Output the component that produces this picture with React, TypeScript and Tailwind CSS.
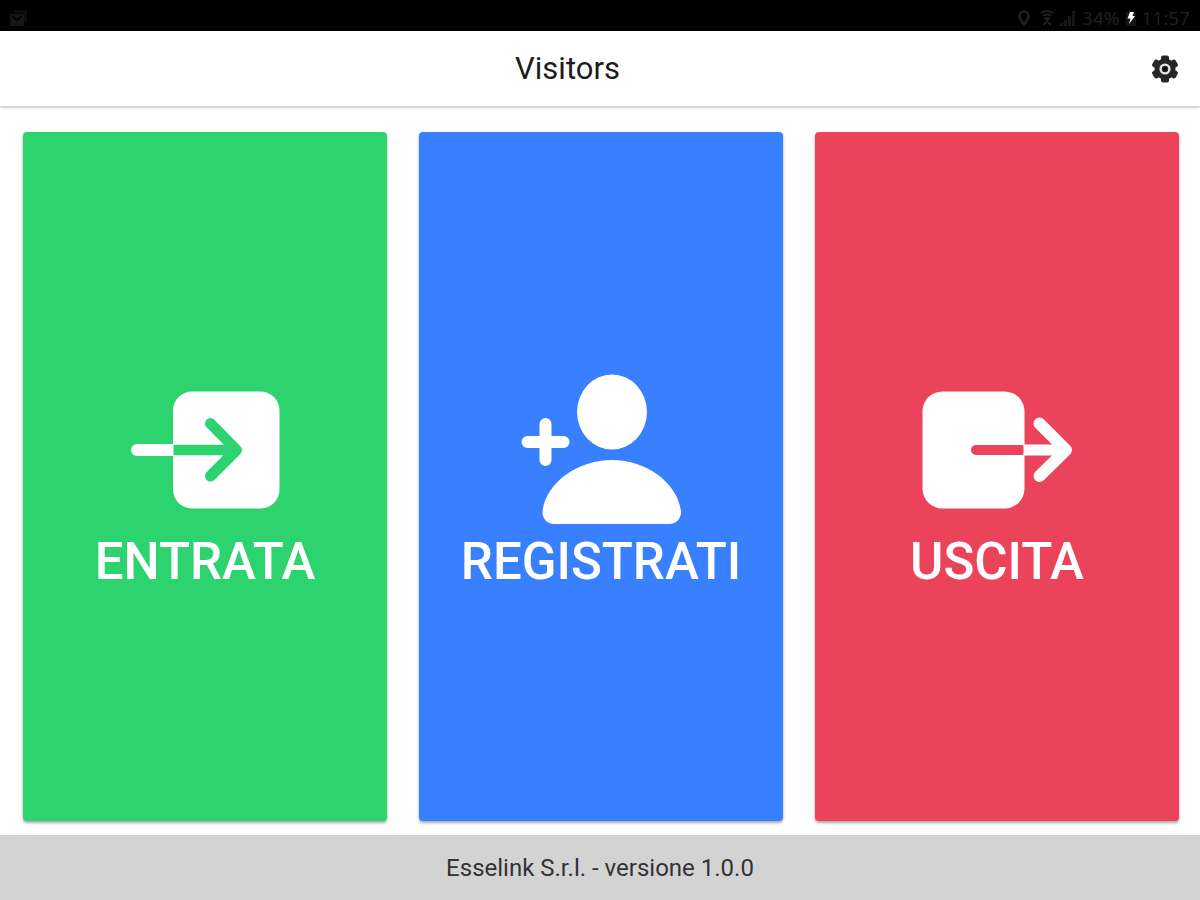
import type { ReactNode } from "react";

function EnterIcon() {
  return (
    <svg viewBox="0 0 170 170" className="size-[170px]" fill="none" strokeLinecap="round" strokeLinejoin="round" aria-hidden="true">
      <rect x="53" y="26.5" width="106.5" height="117" rx="19" fill="#fff" />
      <path d="M17 85H48" stroke="#fff" strokeWidth="12" />
      <path d="M47 79h6.500v12h-6.500z" fill="#fff" />
      <path d="M53.500 85H114" stroke="#2dd36f" strokeWidth="10.500" strokeLinecap="butt" />
      <path d="M90.500 58.500L116.500 85L90.500 111" stroke="#2dd36f" strokeWidth="11" />
    </svg>
  );
}

function RegisterIcon() {
  return (
    <svg viewBox="0 0 170 170" className="size-[170px]" fill="#fff" aria-hidden="true">
      <ellipse cx="96" cy="47" rx="35" ry="37.500" />
      <path d="M96 95C62 95 31 117 26.700 145C25.500 152.500 30.500 159 38 159H153.500C161 159 166 152.500 164.800 145C160.500 117 130 95 96 95Z" />
      <path d="M29.500 59V95M11.500 77H47.500" stroke="#fff" strokeWidth="12" strokeLinecap="round" />
    </svg>
  );
}

function ExitIcon() {
  return (
    <svg viewBox="0 0 170 170" className="size-[170px]" fill="none" strokeLinecap="round" strokeLinejoin="round" aria-hidden="true">
      <rect x="10.500" y="26.500" width="102" height="117" rx="20" fill="#fff" />
      <path d="M64 85H108" stroke="#eb445a" strokeWidth="10" />
      <path d="M106 80h5.500v10h-5.500z" fill="#eb445a" />
      <path d="M111.500 85H150" stroke="#fff" strokeWidth="11" strokeLinecap="butt" />
      <path d="M127.500 58.500L154 85L127.500 111" stroke="#fff" strokeWidth="12" />
    </svg>
  );
}

function GearIcon() {
  return (
    <svg viewBox="0 0 28 28" className="size-7" aria-hidden="true">
      <g fill="#262626">
        <circle cx="14" cy="14" r="10.500" />
        <rect x="10" y="0.500" width="8" height="27" rx="2" />
        <rect x="10" y="0.500" width="8" height="27" rx="2" transform="rotate(60 14 14)" />
        <rect x="10" y="0.500" width="8" height="27" rx="2" transform="rotate(120 14 14)" />
      </g>
      <circle cx="14" cy="14" r="4.400" fill="#262626" stroke="#e4e4e4" strokeWidth="2.400" />
      <circle cx="14" cy="14" r="2" fill="#000" />
    </svg>
  );
}

function StatusBar() {
  return (
    <div className="flex h-[31px] items-center justify-between bg-black px-2.5 pt-1 text-[#202020]">
      <svg viewBox="0 0 18 16" className="h-4 w-[18px]" aria-hidden="true">
        <path d="M4 0h13v12h-3V3H4z" fill="#0d0d0d" />
        <path d="M0 4h14v12H0z" fill="#161616" />
        <path d="M2 6l5 4l5-4" fill="none" stroke="#000" strokeWidth="2" />
      </svg>
      <div className="flex items-center">
        <svg viewBox="0 0 12 16" className="mr-2.5 h-4 w-3" fill="none" stroke="currentColor" strokeWidth="2.500" aria-hidden="true">
          <path d="M6 14.500C3 10.500 1.500 8.500 1.500 6a4.500 4.500 0 0 1 9 0C10.500 8.500 9 10.500 6 14.500Z" />
        </svg>
        <svg viewBox="0 0 14 16" className="mr-1.5 h-4 w-3.5" fill="none" stroke="currentColor" strokeWidth="2" aria-hidden="true">
          <path d="M1 3q6-4 12 0M3 6q4-3 8 0M4.500 9q2.500-2 5 0M7 9v3M3 15l3-3M11 15l-3-3" />
        </svg>
        <svg viewBox="0 0 16 16" className="mr-1.5 h-4 w-4" fill="#161616" aria-hidden="true">
          <path d="M0 16v-3h3v3zM4 16v-6h3v6zM8 16V6h3v10zM12 16V1h3v15z" />
        </svg>
        <span className="font-['Open_Sans',sans-serif] text-[19px] leading-6">34%</span>
        <svg viewBox="0 0 10 16" className="mx-1.5 h-4 w-2.5" aria-hidden="true">
          <path d="M3 0h4v2h3v14H0V2h3z" fill="#161616" />
          <path d="M4 2h4L6.500 6H9L3 14L4.500 8.500H1.500z" fill="#fff" />
        </svg>
        <span className="font-['Open_Sans',sans-serif] text-[19px] leading-6">11:57</span>
      </div>
    </div>
  );
}

function Tile({ label, color, children }: { label: string; color: string; children: ReactNode }) {
  return (
    <button
      type="button"
      className={`flex flex-1 cursor-pointer flex-col items-center justify-center rounded-[4px] text-[51px] leading-[54px] font-medium text-white shadow-[0_2px_3px_rgba(0,0,0,0.35)] ${color}`}
    >
      {children}
      {label}
    </button>
  );
}

export default function App() {
  return (
    <div className="flex min-h-screen flex-col bg-white font-[Roboto,sans-serif]">
      <StatusBar />
      <header className="flex h-[75px] items-center gap-4 pr-[21px] shadow-[0_2px_2px_rgba(0,0,0,0.2)]">
        <h1 className="flex-1 text-center text-[31px] leading-9 text-[#1c1c1c]">Visitors</h1>
        <button type="button" aria-label="Impostazioni" className="cursor-pointer">
          <GearIcon />
        </button>
      </header>
      <main className="flex flex-1 gap-8 pt-[26px] pr-[21px] pb-3.5 pl-[23px]">
        <Tile label="ENTRATA" color="bg-[#2dd36f]">
          <EnterIcon />
        </Tile>
        <Tile label="REGISTRATI" color="bg-[#3880ff]">
          <RegisterIcon />
        </Tile>
        <Tile label="USCITA" color="bg-[#eb445a]">
          <ExitIcon />
        </Tile>
      </main>
      <footer className="flex h-[65px] items-center justify-center bg-[#d3d3d3] text-2xl text-[#333]">
        Esselink S.r.l. - versione 1.0.0
      </footer>
    </div>
  );
}
